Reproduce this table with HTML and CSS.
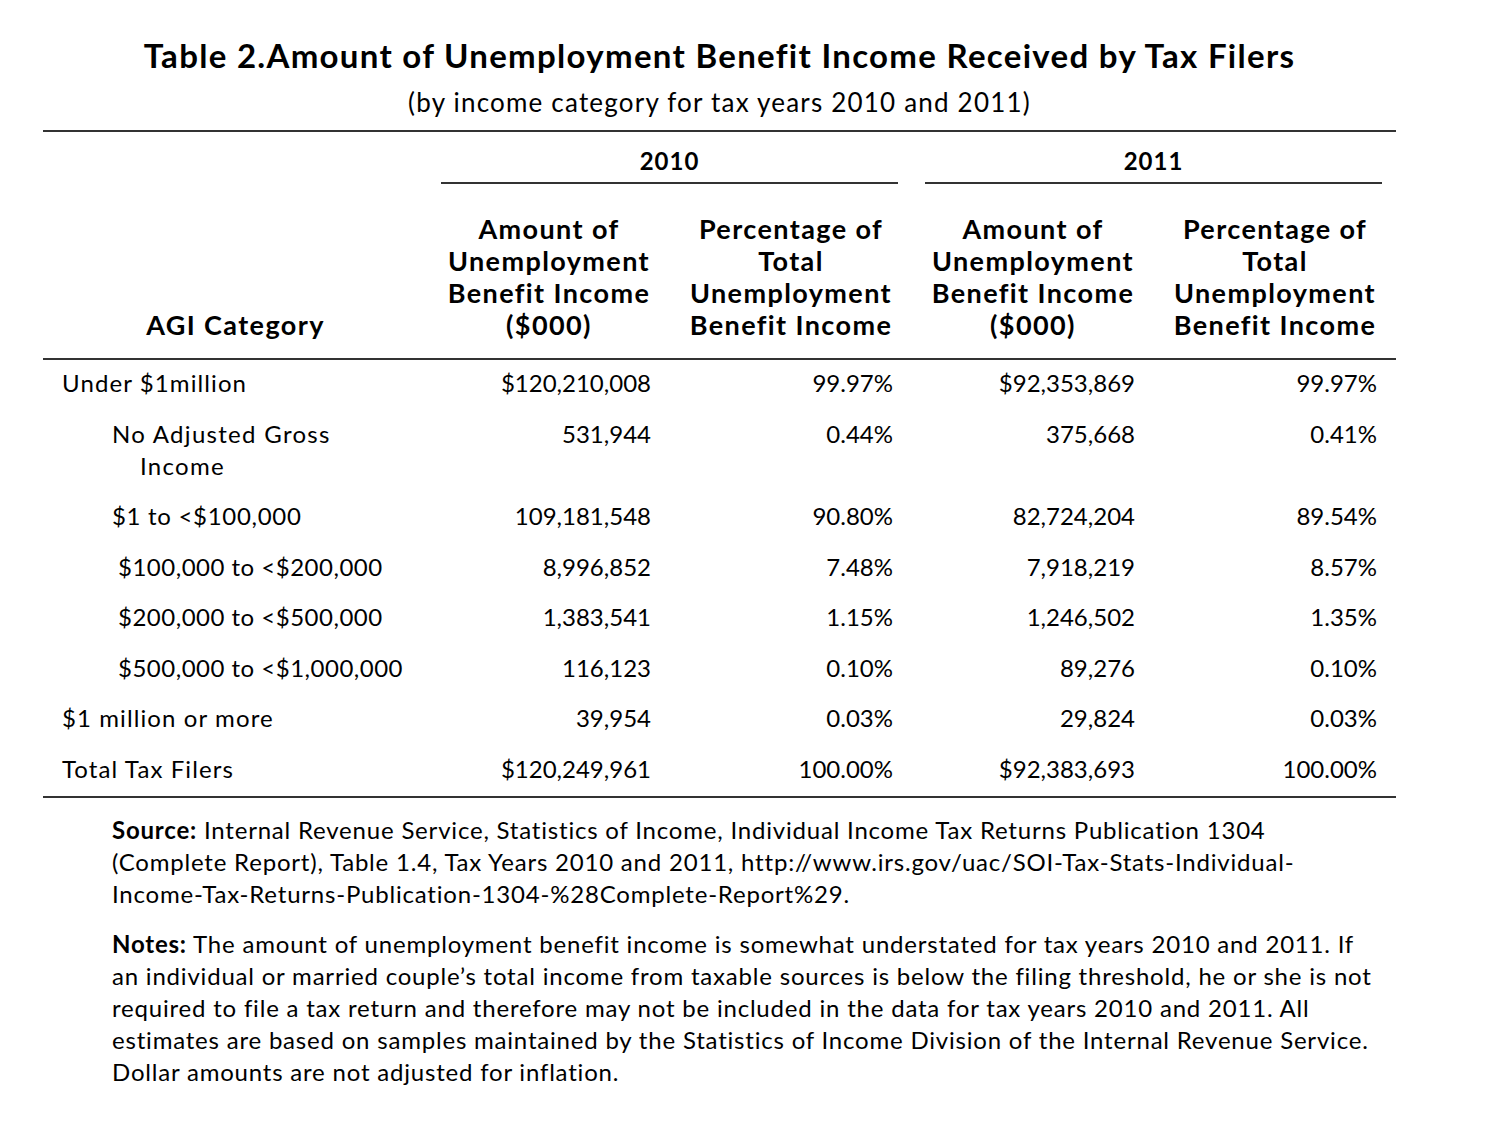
FILE: index.html
```html
<!DOCTYPE html>
<html lang="en">
<head>
<meta charset="utf-8">
<title>Table 2. Amount of Unemployment Benefit Income Received by Tax Filers</title>
<link rel="stylesheet" href="styles.css">
</head>
<body>
<main class="page">
  <header class="caption">
    <h1 class="title">Table 2.Amount of Unemployment Benefit Income Received by Tax Filers</h1>
    <p class="subtitle">(by income category for tax years 2010 and 2011)</p>
  </header>

  <div class="table">
    <div class="cell year-spacer"></div>
    <div class="cell year"><span class="year-text">2010</span></div>
    <div class="cell year"><span class="year-text">2011</span></div>

    <div class="cell head head-label">AGI Category</div>
    <div class="cell head">Amount of<br>Unemployment<br>Benefit Income<br>($000)</div>
    <div class="cell head">Percentage of<br>Total<br>Unemployment<br>Benefit Income</div>
    <div class="cell head">Amount of<br>Unemployment<br>Benefit Income<br>($000)</div>
    <div class="cell head">Percentage of<br>Total<br>Unemployment<br>Benefit Income</div>

    <div class="cell label lvl0">Under $1million</div>
    <div class="cell num">$120,210,008</div>
    <div class="cell num">99.97%</div>
    <div class="cell num">$92,353,869</div>
    <div class="cell num">99.97%</div>

    <div class="cell label hang">No Adjusted Gross<br>Income</div>
    <div class="cell num">531,944</div>
    <div class="cell num">0.44%</div>
    <div class="cell num">375,668</div>
    <div class="cell num">0.41%</div>

    <div class="cell label lvl1">$1 to &lt;$100,000</div>
    <div class="cell num">109,181,548</div>
    <div class="cell num">90.80%</div>
    <div class="cell num">82,724,204</div>
    <div class="cell num">89.54%</div>

    <div class="cell label lvl2">$100,000 to &lt;$200,000</div>
    <div class="cell num">8,996,852</div>
    <div class="cell num">7.48%</div>
    <div class="cell num">7,918,219</div>
    <div class="cell num">8.57%</div>

    <div class="cell label lvl2">$200,000 to &lt;$500,000</div>
    <div class="cell num">1,383,541</div>
    <div class="cell num">1.15%</div>
    <div class="cell num">1,246,502</div>
    <div class="cell num">1.35%</div>

    <div class="cell label lvl2">$500,000 to &lt;$1,000,000</div>
    <div class="cell num">116,123</div>
    <div class="cell num">0.10%</div>
    <div class="cell num">89,276</div>
    <div class="cell num">0.10%</div>

    <div class="cell label lvl0">$1 million or more</div>
    <div class="cell num">39,954</div>
    <div class="cell num">0.03%</div>
    <div class="cell num">29,824</div>
    <div class="cell num">0.03%</div>

    <div class="cell label lvl0 last">Total Tax Filers</div>
    <div class="cell num last">$120,249,961</div>
    <div class="cell num last">100.00%</div>
    <div class="cell num last">$92,383,693</div>
    <div class="cell num last">100.00%</div>
  </div>

  <section class="notes">
    <p class="note"><strong>Source:</strong> Internal Revenue Service, Statistics of Income, Individual Income Tax Returns Publication 1304<br>(Complete Report), Table 1.4, Tax Years 2010 and 2011, http://www.irs.gov/uac/SOI-Tax-Stats-Individual-<br>Income-Tax-Returns-Publication-1304-%28Complete-Report%29.</p>
    <p class="note"><strong>Notes:</strong> The amount of unemployment benefit income is somewhat understated for tax years 2010 and 2011. If<br>an individual or married couple’s total income from taxable sources is below the filing threshold, he or she is not<br>required to file a tax return and therefore may not be included in the data for tax years 2010 and 2011. All<br>estimates are based on samples maintained by the Statistics of Income Division of the Internal Revenue Service.<br>Dollar amounts are not adjusted for inflation.</p>
  </section>
</main>
</body>
</html>
```

FILE: styles.css
```css
* {
  box-sizing: border-box;
}

html, body {
  margin: 0;
  padding: 0;
  background: #ffffff;
}

body {
  font-family: Lato, "Open Sans", "DejaVu Sans", sans-serif;
  color: #000000;
}

.page {
  width: 1353px;
  margin-left: 43px;
  padding-top: 35px;
}

.caption {
  text-align: center;
  padding-bottom: 11px;
  border-bottom: 2px solid #333333;
}

.title {
  margin: 0;
  font-size: 33px;
  line-height: 40px;
  font-weight: 700;
  letter-spacing: 1.3px;
}

.subtitle {
  margin: 10px 0 0;
  font-size: 26px;
  line-height: 34px;
  font-weight: 400;
  letter-spacing: 1.2px;
}

.table {
  display: grid;
  grid-template-columns: 385px 242px 242px 242px 242px;
}

.cell {
  font-size: 24px;
  line-height: 32px;
}

.year-spacer {
  grid-column: 1;
}

.year {
  grid-column: span 2;
  padding: 14px 14px 0 13px;
  text-align: center;
  font-weight: 700;
  font-size: 24px;
  line-height: 30px;
  letter-spacing: 1px;
}

.year-text {
  display: block;
  padding-bottom: 6px;
  border-bottom: 2px solid #333333;
}

.head {
  padding: 29px 0 17px;
  font-weight: 700;
  font-size: 27px;
  line-height: 32px;
  letter-spacing: 1.4px;
  text-align: center;
  border-bottom: 2px solid #333333;
  display: flex;
  flex-direction: column;
  justify-content: flex-end;
}

.label {
  padding: 7px 0 11.5px;
  white-space: nowrap;
  letter-spacing: 1.1px;
}

.lvl0 {
  padding-left: 19px;
}

.lvl1 {
  padding-left: 69px;
  letter-spacing: 0.7px;
}

.lvl2 {
  padding-left: 75px;
  letter-spacing: 0.5px;
}

.hang {
  padding-left: 97px;
  text-indent: -28px;
  letter-spacing: 1.3px;
}

.num {
  padding: 7px 19px 11.5px 0;
  text-align: right;
  white-space: nowrap;
}

.last {
  border-bottom: 2px solid #333333;
}

.notes {
  padding: 16px 0 0 69px;
}

.note {
  margin: 0 0 18px;
  font-size: 24px;
  line-height: 32px;
  letter-spacing: 0.8px;
  white-space: nowrap;
}

.note strong {
  font-weight: 700;
}
```
